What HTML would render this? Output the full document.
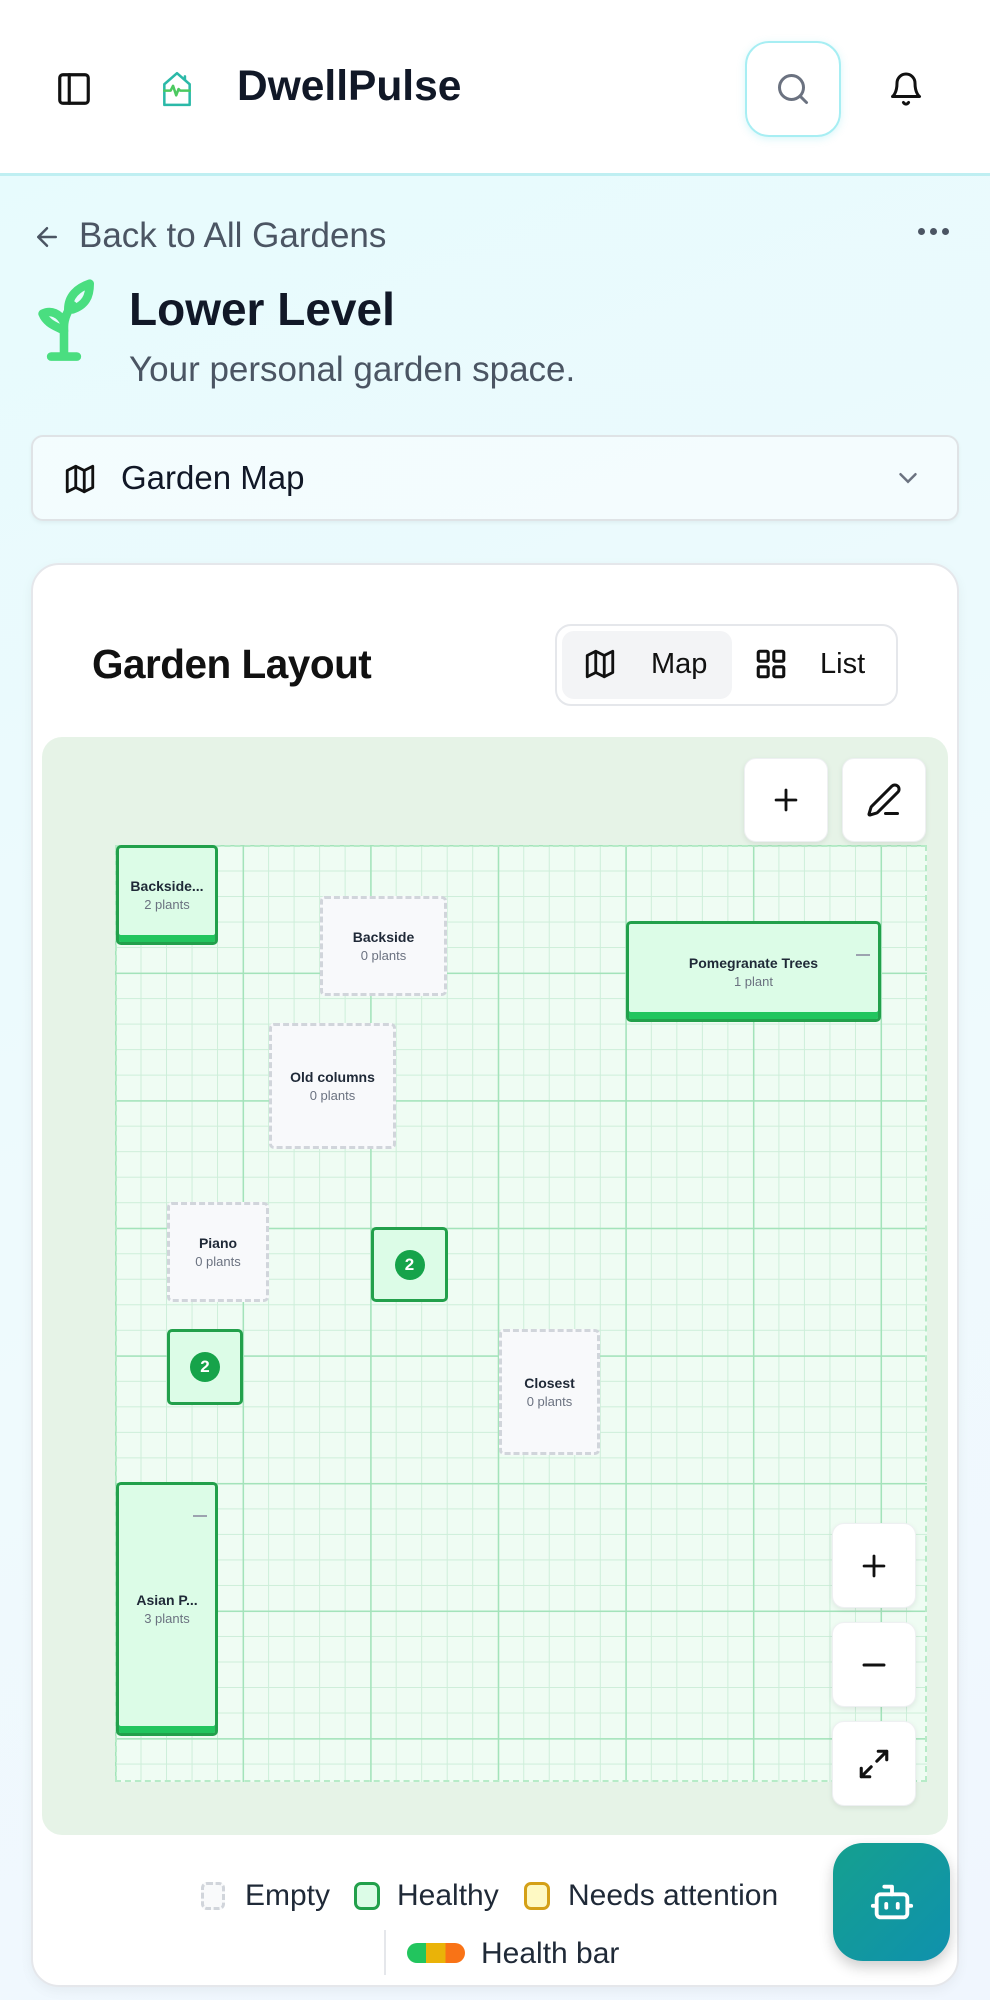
<!DOCTYPE html>
<html><head><meta charset="utf-8"><style>
*{box-sizing:border-box;margin:0;padding:0}
body{width:990px;height:2000px;overflow:hidden;font-family:"Liberation Sans",sans-serif;background:linear-gradient(160deg,#e6fbfd 0%,#effafd 60%,#f0f6fe 100%);position:relative;color:#111827}
.abs{position:absolute}
.hdr{left:0;top:0;width:990px;height:176px;background:#fff;border-bottom:3px solid #bfeff2}
svg{display:block}
.box{position:absolute;display:flex;flex-direction:column;align-items:center;justify-content:center;text-align:center;border-radius:5px}
.box b{font-size:14px;color:#1f2937;font-weight:700}
.box span{font-size:13px;color:#6b7280;margin-top:3px}
.h{background:#dcfce7;border:3px solid #22a04b;box-shadow:inset 0 -7px 0 #22c55e}
.e{background:#f8f9fb;border:3px dashed #d1d5db}
.badge{width:30px;height:30px;border-radius:50%;background:#16a34a;color:#fff;font-weight:700;font-size:17px;display:flex;align-items:center;justify-content:center}
.btn{position:absolute;background:#fff;border-radius:12px;box-shadow:0 2px 6px rgba(0,0,0,.08);border:1px solid #eef0f2;display:flex;align-items:center;justify-content:center}
</style></head><body>
<div class="abs hdr"></div>
<svg class="abs" style="left:55px;top:70px" width="38" height="38" viewBox="0 0 24 24" fill="none" stroke="#111" stroke-width="2" stroke-linecap="round" stroke-linejoin="round"><rect x="3" y="3" width="18" height="18" rx="2"/><path d="M9 3v18"/></svg>
<svg class="abs" style="left:158px;top:68px" width="38" height="42" viewBox="0 0 24 26" fill="none" stroke-width="1.6" stroke-linecap="round" stroke-linejoin="round"><path d="M4 10L12 3l8 7v13H4z" stroke="#2bb9a8"/><path d="M17 5v2" stroke="#2bb9a8"/><path d="M4 14h4l1.5-3 2 6 1.5-4 1 1h6" stroke="#4cc960"/></svg>
<div class="abs" style="left:237px;top:63px;font-size:42.5px;font-weight:700;color:#111827">DwellPulse</div>
<div class="abs" style="left:745px;top:41px;width:96px;height:96px;border:2px solid #a7eef3;border-radius:24px;box-shadow:0 2px 8px rgba(100,220,230,.25)"></div>
<svg class="abs" style="left:775px;top:71px" width="36" height="36" viewBox="0 0 24 24" fill="none" stroke="#6b7280" stroke-width="2" stroke-linecap="round"><circle cx="11" cy="11" r="8"/><path d="M21 21l-4.3-4.3"/></svg>
<svg class="abs" style="left:888px;top:69px" width="36" height="40" viewBox="0 0 24 24" fill="none" stroke="#111" stroke-width="2" stroke-linecap="round" stroke-linejoin="round"><path d="M6 8a6 6 0 0 1 12 0c0 7 3 9 3 9H3s3-2 3-9"/><path d="M10.3 21a1.9 1.9 0 0 0 3.4 0"/></svg>

<svg class="abs" style="left:32px;top:222px" width="30" height="30" viewBox="0 0 24 24" fill="none" stroke="#4b5563" stroke-width="2" stroke-linecap="round" stroke-linejoin="round"><path d="M19 12H5M12 19l-7-7 7-7"/></svg>
<div class="abs" style="left:79px;top:216px;font-size:35px;color:#4b5563">Back to All Gardens</div>
<div class="abs" style="left:918px;top:228px;display:flex;gap:5px"><i style="width:7px;height:7px;border-radius:50%;background:#4b5563"></i><i style="width:7px;height:7px;border-radius:50%;background:#4b5563"></i><i style="width:7px;height:7px;border-radius:50%;background:#4b5563"></i></div>
<svg class="abs" style="left:34px;top:270px" width="60" height="96" viewBox="0 0 14 22" fill="none" stroke="#4ade80" stroke-width="2" stroke-linecap="round" stroke-linejoin="round"><path d="M4 20h6M7 20v-7c0-2 1-4 2-5"/><path d="M7 14c-1.5-1-4-1.5-5-4 2-1 4 0 5 2"/><path d="M8 9c0-3 2-5 5-6 0 3-1 5-4 6"/></svg>
<div class="abs" style="left:129px;top:282px;font-size:46px;font-weight:700;color:#111827">Lower Level</div>
<div class="abs" style="left:129px;top:350px;font-size:35px;color:#4b5563">Your personal garden space.</div>

<div class="abs" style="left:31px;top:435px;width:928px;height:86px;border:2px solid #dfe3e6;border-radius:12px;background:rgba(255,255,255,.45);box-shadow:0 2px 4px rgba(0,0,0,.05)"></div>
<svg class="abs" style="left:63px;top:462px" width="34" height="34" viewBox="0 0 24 24" fill="none" stroke="#111" stroke-width="2" stroke-linecap="round" stroke-linejoin="round"><path d="M3 6l6-3 6 3 6-3v15l-6 3-6-3-6 3z"/><path d="M9 3v15M15 6v15"/></svg>
<div class="abs" style="left:121px;top:459px;font-size:33px;color:#111827">Garden Map</div>
<svg class="abs" style="left:893px;top:463px" width="30" height="30" viewBox="0 0 24 24" fill="none" stroke="#6b7280" stroke-width="2" stroke-linecap="round"><path d="M6 9l6 6 6-6"/></svg>

<div class="abs" style="left:31px;top:563px;width:928px;height:1424px;background:#fff;border-radius:28px;border:2px solid #e5e7eb;box-shadow:0 4px 12px rgba(0,0,0,.05)"></div>
<div class="abs" style="left:92px;top:641px;font-size:40.5px;font-weight:700;color:#111;letter-spacing:-.5px">Garden Layout</div>
<div class="abs" style="left:555px;top:624px;width:343px;height:82px;border:2px solid #e5e7eb;border-radius:16px"></div>
<div class="abs" style="left:562px;top:631px;width:170px;height:68px;background:#f3f4f6;border-radius:12px"></div>
<svg class="abs" style="left:583px;top:647px" width="34" height="34" viewBox="0 0 24 24" fill="none" stroke="#111" stroke-width="2" stroke-linecap="round" stroke-linejoin="round"><path d="M3 6l6-3 6 3 6-3v15l-6 3-6-3-6 3z"/><path d="M9 3v15M15 6v15"/></svg>
<div class="abs" style="left:651px;top:648px;font-size:29px;color:#111">Map</div>
<svg class="abs" style="left:754px;top:647px" width="34" height="34" viewBox="0 0 24 24" fill="none" stroke="#111" stroke-width="2.2"><rect x="3" y="3" width="7" height="7" rx="1"/><rect x="14" y="3" width="7" height="7" rx="1"/><rect x="3" y="14" width="7" height="7" rx="1"/><rect x="14" y="14" width="7" height="7" rx="1"/></svg>
<div class="abs" style="left:820px;top:648px;font-size:29px;color:#111">List</div>

<div class="abs" style="left:42px;top:737px;width:906px;height:1098px;background:#e6f3e7;border-radius:20px"></div>
<div class="abs" style="left:115px;top:845px;width:812px;height:937px;border:2px dashed #b6ebc7;background-color:#effcf3;background-image:linear-gradient(90deg,#a3e3ba 1.5px,transparent 1.5px),linear-gradient(#a3e3ba 1.5px,transparent 1.5px),linear-gradient(90deg,#cdeed9 1px,transparent 1px),linear-gradient(#cdeed9 1px,transparent 1px);background-size:127.6px 127.6px,127.6px 127.6px,25.52px 25.52px,25.52px 25.52px;background-position:-2px -2px"></div>

<div class="box h" style="left:116px;top:845px;width:102px;height:100px"><b>Backside...</b><span>2 plants</span></div>
<div class="box e" style="left:320px;top:896px;width:127px;height:100px"><b>Backside</b><span>0 plants</span></div>
<div class="box h" style="left:626px;top:921px;width:255px;height:101px"><b>Pomegranate Trees</b><span>1 plant</span><i style="position:absolute;right:8px;top:30px;width:14px;height:2px;background:#9ca3af"></i></div>
<div class="box e" style="left:269px;top:1023px;width:127px;height:126px"><b>Old columns</b><span>0 plants</span></div>
<div class="box e" style="left:167px;top:1202px;width:102px;height:100px"><b>Piano</b><span>0 plants</span></div>
<div class="box h" style="left:371px;top:1227px;width:77px;height:75px;box-shadow:none"><div class="badge">2</div></div>
<div class="box h" style="left:167px;top:1329px;width:76px;height:76px;box-shadow:none"><div class="badge">2</div></div>
<div class="box e" style="left:499px;top:1329px;width:101px;height:126px"><b>Closest</b><span>0 plants</span></div>
<div class="box h" style="left:116px;top:1482px;width:102px;height:254px"><b>Asian P...</b><span>3 plants</span><i style="position:absolute;right:8px;top:30px;width:14px;height:2px;background:#9ca3af"></i></div>

<div class="btn" style="left:744px;top:758px;width:84px;height:84px"><svg width="34" height="34" viewBox="0 0 24 24" fill="none" stroke="#111" stroke-width="2" stroke-linecap="round"><path d="M12 5v14M5 12h14"/></svg></div>
<div class="btn" style="left:842px;top:758px;width:84px;height:84px"><svg width="36" height="36" viewBox="0 0 24 24" fill="none" stroke="#111" stroke-width="2" stroke-linecap="round" stroke-linejoin="round"><path d="M13 21h8"/><path d="M21.2 6.8a2.8 2.8 0 0 0-4-4L3.8 16.2a2 2 0 0 0-.5.8l-1.3 4.4a.5.5 0 0 0 .6.6l4.4-1.3a2 2 0 0 0 .8-.5z"/></svg></div>
<div class="btn" style="left:832px;top:1523px;width:84px;height:85px"><svg width="34" height="34" viewBox="0 0 24 24" fill="none" stroke="#111" stroke-width="2" stroke-linecap="round"><path d="M12 5v14M5 12h14"/></svg></div>
<div class="btn" style="left:832px;top:1622px;width:84px;height:85px"><svg width="34" height="34" viewBox="0 0 24 24" fill="none" stroke="#111" stroke-width="2.2" stroke-linecap="round"><path d="M5 12h14"/></svg></div>
<div class="btn" style="left:832px;top:1721px;width:84px;height:85px"><svg width="34" height="34" viewBox="0 0 24 24" fill="none" stroke="#111" stroke-width="2.2" stroke-linecap="round" stroke-linejoin="round"><path d="M15 3h6v6M21 3l-7 7M9 21H3v-6M3 21l7-7"/></svg></div>

<div class="abs" style="left:201px;top:1882px;width:24px;height:28px;border:3px dashed #d1d5db;border-radius:6px;background:#f9fafb"></div>
<div class="abs" style="left:245px;top:1879px;font-size:30px;color:#1f2937">Empty</div>
<div class="abs" style="left:354px;top:1882px;width:26px;height:28px;border:3px solid #22a04b;border-radius:7px;background:#dcfce7"></div>
<div class="abs" style="left:397px;top:1879px;font-size:30px;color:#1f2937">Healthy</div>
<div class="abs" style="left:524px;top:1882px;width:26px;height:28px;border:3px solid #d4a017;border-radius:7px;background:#fef9c3"></div>
<div class="abs" style="left:568px;top:1879px;font-size:30px;color:#1f2937">Needs attention</div>
<div class="abs" style="left:384px;top:1930px;width:2px;height:45px;background:#e5e7eb"></div>
<div class="abs" style="left:407px;top:1943px;width:58px;height:20px;border-radius:10px;background:linear-gradient(90deg,#22c55e 0 33%,#eab308 33% 66%,#f97316 66%)"></div>
<div class="abs" style="left:481px;top:1937px;font-size:30px;color:#1f2937">Health bar</div>

<div class="abs" style="left:833px;top:1843px;width:117px;height:118px;border-radius:30px;background:linear-gradient(135deg,#15a08f,#0f91ad);box-shadow:0 6px 14px rgba(0,0,0,.2);display:flex;align-items:center;justify-content:center"><svg width="46" height="46" viewBox="0 0 24 24" fill="none" stroke="#fff" stroke-width="2" stroke-linecap="round" stroke-linejoin="round"><path d="M12 8V4H8"/><rect x="4" y="8" width="16" height="12" rx="2"/><path d="M2 14h2M20 14h2M15 13v2M9 13v2"/></svg></div>
</body></html>
